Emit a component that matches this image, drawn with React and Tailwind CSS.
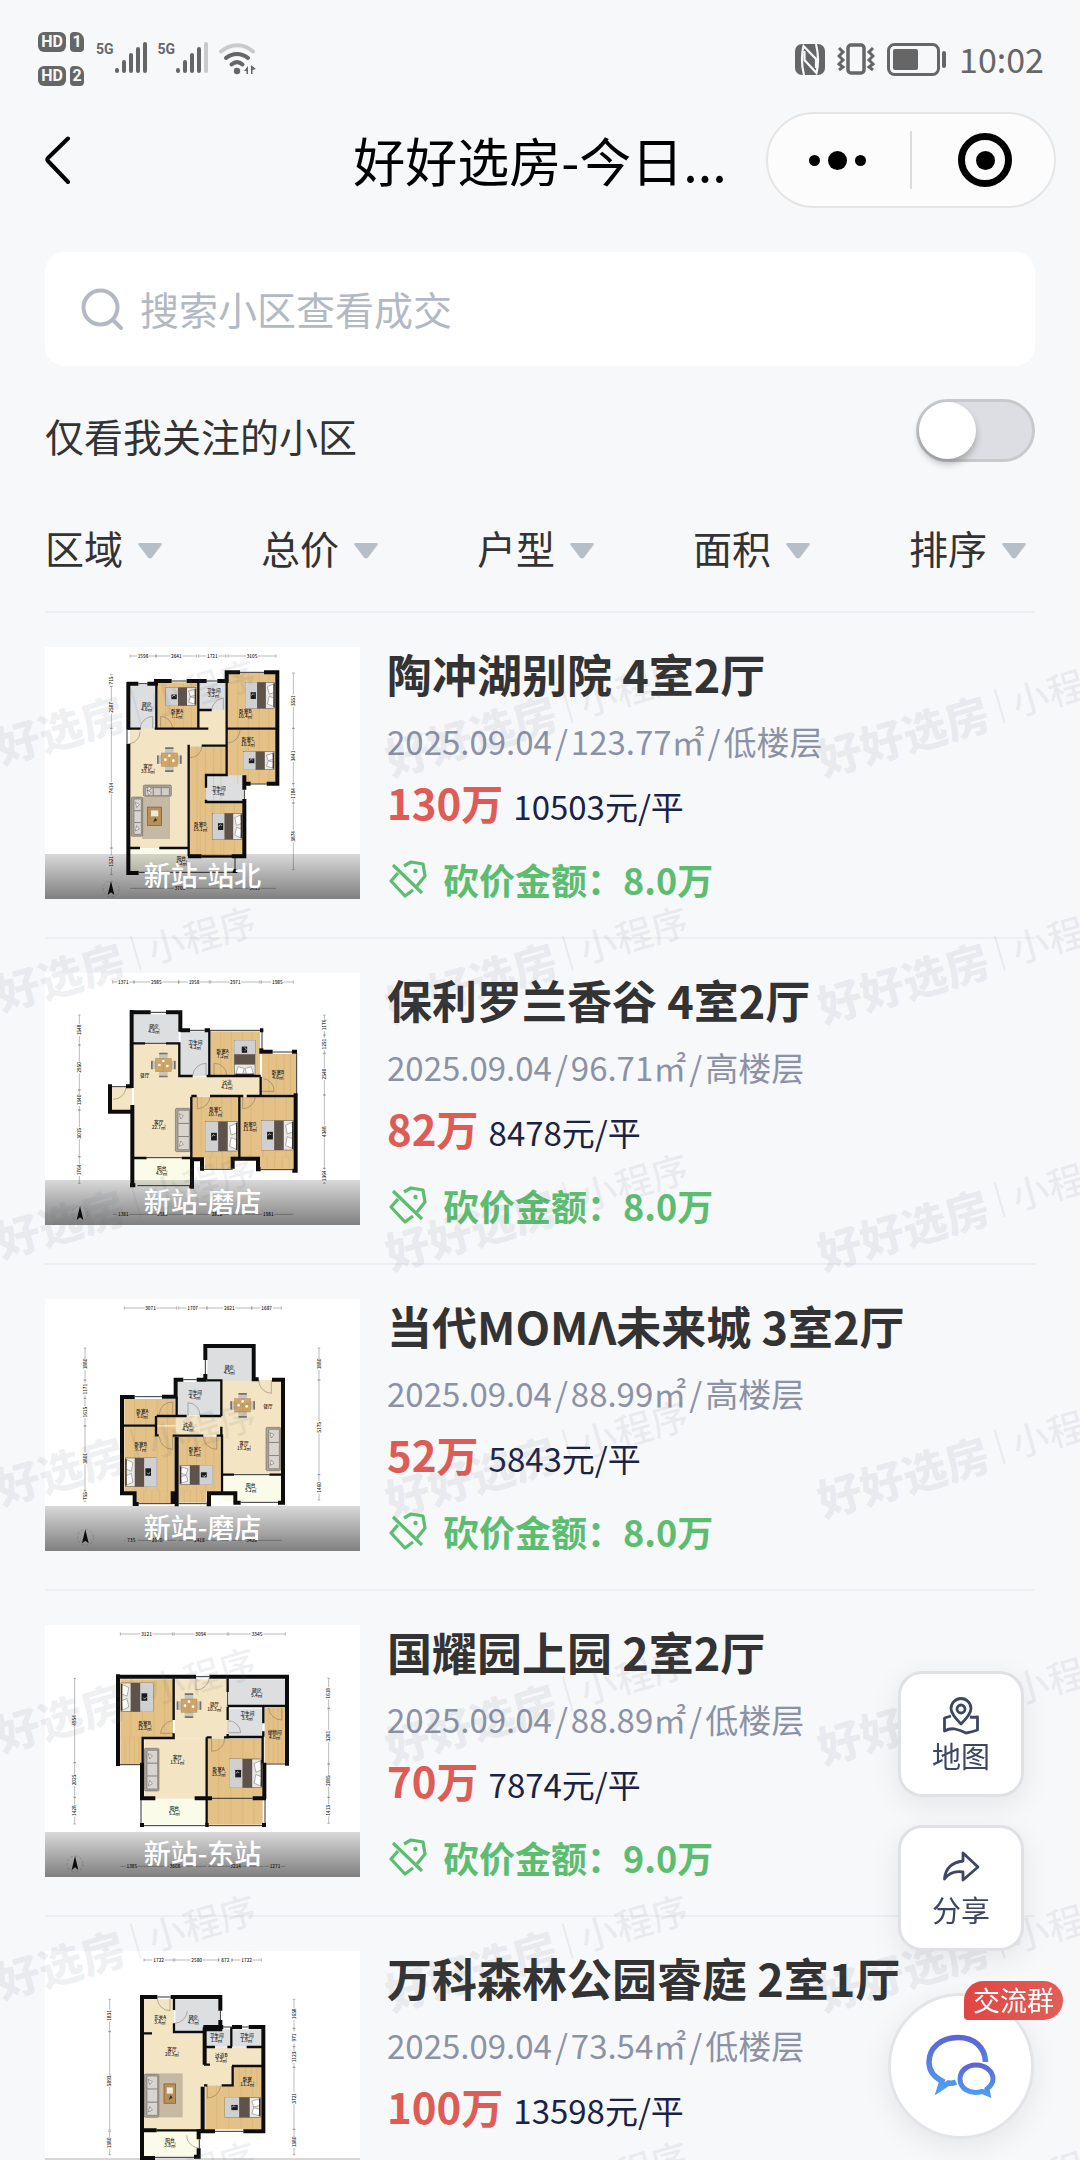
import React, { useState } from 'react';

const homes = [
  { name: '陶冲湖别院 4室2厅', date: '2025.09.04', area: '123.77㎡', floor: '低楼层', price: '130万', unit: '10503元/平', cut: '8.0万', district: '新站-站北' },
  { name: '保利罗兰香谷 4室2厅', date: '2025.09.04', area: '96.71㎡', floor: '高楼层', price: '82万', unit: '8478元/平', cut: '8.0万', district: '新站-磨店' },
  { name: '当代MOMΛ未来城 3室2厅', date: '2025.09.04', area: '88.99㎡', floor: '高楼层', price: '52万', unit: '5843元/平', cut: '8.0万', district: '新站-磨店' },
  { name: '国耀园上园 2室2厅', date: '2025.09.04', area: '88.89㎡', floor: '低楼层', price: '70万', unit: '7874元/平', cut: '9.0万', district: '新站-东站' },
  { name: '万科森林公园睿庭 2室1厅', date: '2025.09.04', area: '73.54㎡', floor: '低楼层', price: '100万', unit: '13598元/平', cut: '8.0万', district: '新站-站北' },
];

const filters = ['区域', '总价', '户型', '面积', '排序'];

// Floor kinds: t = tile, w = wood, g = wet room, b = balcony
const floorColors = { t: '#f3e5c3', w: '#e3c187', g: '#dcdee0', b: '#fafbe8' };

// Every plan is drawn on a 945 x 756 sheet
const plans = [
  {
    origin: [45, 52],
    rooms: [
      ['t', 300, 240, 290, 110], ['t', 300, 340, 176, 315], ['g', 300, 165, 78, 131], ['w', 382, 158, 122, 138],
      ['g', 507, 158, 84, 83], ['w', 594, 130, 146, 166], ['w', 594, 300, 146, 162], ['w', 479, 350, 112, 330],
      ['w', 479, 515, 160, 165], ['g', 528, 437, 112, 78], ['b', 300, 657, 174, 72],
    ],
    thick: 'M295 157V300M295 342V730H326M290 162H325M352 162H378V154H425M470 154H530M562 154H590V128H630M702 128H742V462H710M662 462H638M643 437V480M643 508V680H605M474 680H515M608 724H622',
    thin: 'M379 160V296M505 158V296M295 297H332M374 297H535M590 150V297H742M507 241H545M590 241V250M590 300V436H528V474M528 510V517H640M515 348H590M476 345V680M297 655H330M388 655H476M515 680H610',
    win: 'M325 162H352M425 154H470M530 154H562M630 128H702M662 463H710M643 480V508M326 728H620M515 682H605M291 300V342M615 684V720',
    doors: 'M330 296A40 40 0 0 1 368 260V296M392 296V260A38 38 0 0 1 428 296M545 240A40 40 0 0 1 580 205V240M594 340A40 40 0 0 0 630 302M300 342A36 36 0 0 0 330 306M480 384A36 36 0 0 0 516 350',
    beds: [[408, 174, 90, 54, 0], [646, 158, 88, 78, 0], [640, 366, 92, 54, 0], [548, 551, 88, 78, 0]],
    tables: [[418, 390]],
    sofas: [[304, 502, 34, 118, 0], [340, 466, 84, 34, 1]],
    rugs: [[336, 502, 84, 126]],
    labels: [['厨房', '4.6㎡', 350, 230], ['卧室A', '7.1㎡', 441, 250], ['卫生间', '3.2㎡', 551, 187], ['卧室B', '10.4㎡', 646, 250], ['卧室C', '10.2㎡', 654, 333], ['客厅', '33.8㎡', 354, 414], ['卫生间', '3.5㎡', 566, 482], ['卧室D', '15.1㎡', 511, 588], ['阳台', '4.2㎡', 454, 690]],
    dimX: [[300, 378, '1598'], [378, 500, '2641'], [506, 588, '1721'], [594, 738, '3105']],
    dimY: [[244, 135, 170, '715'], [244, 170, 296, '2587'], [244, 296, 655, '7414'], [244, 655, 735, '1521'], [790, 130, 296, '3551'], [790, 296, 462, '3441'], [790, 462, 520, '1184'], [790, 520, 720, '3874']],
    south: [[300, 600, '3700'], [610, 738, '3015']],
    compass: [243, 778],
  },
  {
    origin: [45, 39],
    rooms: [
      ['t', 312, 250, 134, 345], ['t', 312, 350, 380, 58], ['t', 440, 400, 44, 194], ['g', 312, 163, 134, 86], ['g', 452, 214, 85, 134],
      ['w', 542, 214, 148, 133], ['w', 696, 282, 102, 122], ['w', 486, 410, 140, 184], ['w', 630, 410, 165, 184],
      ['w', 524, 590, 84, 36], ['w', 690, 590, 104, 38], ['b', 312, 596, 170, 78], ['t', 246, 382, 60, 68],
    ],
    thick: 'M305 150V384M288 379H305M240 373V455H307V435M307 440V678M300 157H362M408 157H451V215M451 211H480M524 211H540M690 211H700M694 265V275H728M786 275H801M797 400V632H787M316 676H300M486 594V680H478M486 598H516V626H522M608 626V596H684V628H692',
    thin: 'M305 250H345M408 250H448V348H488M530 348H692M538 212V348M692 350V408H800M650 408H700M484 410V595M484 408H500M540 408H640M628 410V594M312 594H350M455 594H484',
    win: 'M362 157H408M480 211H524M540 211H690M696 216V265M728 276H786M800 280V405M522 628H608M692 629H787M322 677H478M488 628V670M242 380H288M345 250H408M350 593H455',
    doors: 'M488 346A40 40 0 0 1 528 310V346M552 346V310A36 36 0 0 1 590 346M696 394H732A36 36 0 0 0 700 356M502 410V446A38 38 0 0 0 540 410M638 410V446A38 38 0 0 0 676 410M250 418A38 38 0 0 0 288 382',
    beds: [[592, 262, 104, 62, 90], [526, 485, 96, 88, 0], [694, 482, 96, 88, 0]],
    tables: [[400, 315]],
    sofas: [[436, 445, 46, 130, 0]],
    rugs: [],
    labels: [['厨房', '4.8㎡', 372, 204], ['卫生间', '4.2㎡', 496, 253], ['卧室A', '7.2㎡', 578, 280], ['卧室B', '4.6㎡', 744, 342], ['餐厅', '', 344, 350], ['过道', '4.1㎡', 591, 373], ['卧室C', '10.7㎡', 556, 452], ['卧室D', '11.6㎡', 660, 498], ['客厅', '22.7㎡', 386, 492], ['阳台', '4.9㎡', 395, 630]],
    dimX: [[248, 312, '1371'], [312, 446, '2985'], [446, 538, '1958'], [542, 690, '2971'], [694, 790, '1985']],
    dimY: [[148, 165, 255, '1548'], [148, 255, 390, '2950'], [148, 390, 450, '1340'], [148, 450, 590, '3015'], [148, 590, 670, '1764'], [883, 165, 225, '1176'], [883, 225, 280, '1251'], [883, 280, 405, '2548'], [883, 405, 625, '4348'], [883, 625, 670, '1364']],
    south: [[248, 312, '1381'], [312, 482, '3588'], [482, 640, '2812'], [640, 790, '1981']],
    compass: [150, 762],
  },
  {
    origin: [45, 57],
    rooms: [
      ['t', 576, 300, 178, 284], ['t', 380, 408, 200, 58], ['g', 532, 204, 132, 98], ['g', 444, 306, 128, 100],
      ['w', 283, 357, 154, 78], ['w', 283, 440, 154, 195], ['w', 320, 630, 108, 40], ['w', 446, 470, 126, 165], ['w', 446, 630, 84, 38], ['b', 578, 586, 174, 78],
    ],
    thick: 'M526 240V198H671V298H686M526 282V299M500 299H530M432 299H460M437 293V350H396M314 351H276V640H314V672H326M428 672V640H440V470M440 640V673H446M530 673H537V640H616V668H632M744 668H759V299H726',
    thin: 'M530 301H574V408M380 408H470M510 408H574M378 408V437H280M378 437V466H386M440 350V408M440 467H450M428 467H520M560 467H576V640M576 584H612M718 584H755M574 300V360M574 440V470',
    win: 'M526 240V282M460 299H500M314 350H396M326 671H428M446 671H530M632 667H744M612 584H718',
    doors: 'M474 408V368A38 38 0 0 1 510 408M388 402A38 38 0 0 1 428 366V402M388 470A40 40 0 0 0 428 508V470M520 470A40 40 0 0 0 560 508V470M686 300A40 40 0 0 0 724 340V300',
    beds: [[286, 534, 94, 86, 180], [450, 556, 98, 58, 180]],
    tables: [[638, 376]],
    sofas: [[708, 442, 44, 130, 0]],
    rugs: [],
    labels: [['厨房', '4.5㎡', 598, 266], ['卫生间', '4.5㎡', 495, 341], ['卧室A', '5.0㎡', 337, 400], ['过道', '4.2㎡', 474, 438], ['餐厅', '', 714, 384], ['卧室B', '9.7㎡', 332, 497], ['卧室C', '8.1㎡', 495, 512], ['客厅', '19.2㎡', 642, 495], ['阳台', '5.2㎡', 662, 622]],
    dimX: [[283, 440, '3071'], [446, 530, '1707'], [532, 664, '2621'], [666, 754, '1687']],
    dimY: [[165, 204, 300, '1880'], [165, 300, 355, '1171'], [165, 355, 438, '1615'], [165, 438, 632, '3801'], [165, 632, 664, '755'], [867, 204, 300, '1880'], [867, 300, 584, '5175'], [867, 584, 660, '1460']],
    south: [[283, 325, '735'], [325, 438, '2070'], [446, 570, '2418'], [576, 754, '3428']],
    compass: [166, 772],
  },
  {
    origin: [45, 45],
    rooms: [
      ['w', 271, 208, 158, 175], ['w', 271, 380, 66, 84], ['t', 435, 208, 157, 178], ['t', 343, 386, 186, 180], ['g', 596, 208, 170, 80],
      ['g', 596, 296, 102, 84], ['w', 704, 294, 62, 166], ['w', 533, 386, 165, 258], ['b', 340, 568, 188, 76],
    ],
    thick: 'M264 193V468M258 200H498M538 200H771V467M336 458V570M330 565H376M494 565H546M668 565H708M703 458V568M330 645H342M526 645H536M696 645H708',
    thin: 'M431 205V330M431 370V384H338V460M593 205V246M593 288H768M593 290V330M593 372V381H698V460M700 290V340M700 364V380M530 382V645M530 382H545M582 382H598',
    win: 'M498 200H538M270 464H332M708 462H766M333 570V642M340 647H700M705 570V642M593 246V288M546 565H668',
    doors: 'M498 204V240A40 40 0 0 0 538 204M431 370H392A40 40 0 0 1 428 332M594 332V368H632A38 38 0 0 0 594 332M716 294A40 40 0 0 0 755 330V294M545 386V424A38 38 0 0 0 584 386',
    beds: [[273, 219, 96, 86, 180], [598, 447, 98, 86, 0]],
    tables: [[477, 287]],
    sofas: [[343, 415, 44, 128, 0]],
    rugs: [],
    labels: [['卧室B', '12.8㎡', 344, 344], ['餐厅', '10.3㎡', 553, 288], ['厨房', '5.4㎡', 680, 247], ['卫生间', '3.5㎡', 652, 315], ['储物间', '4.0㎡', 734, 372], ['客厅', '13.1㎡', 442, 447], ['卧室A', '15.3㎡', 566, 484], ['阳台', '5.2㎡', 433, 600]],
    dimX: [[271, 428, '3121'], [432, 592, '3094'], [596, 766, '3345']],
    dimY: [[134, 205, 458, '4954'], [134, 458, 562, '2025'], [134, 562, 642, '1428'], [896, 205, 295, '1618'], [896, 295, 462, '3261'], [896, 462, 562, '2085'], [896, 562, 640, '1413']],
    south: [[271, 340, '1385'], [340, 530, '3608'], [534, 700, '3214'], [704, 766, '1271']],
    compass: [135, 762],
  },
  {
    origin: [45, 63],
    rooms: [
      ['t', 342, 208, 90, 104], ['t', 342, 310, 178, 290], ['g', 436, 208, 132, 96], ['g', 526, 298, 74, 52], ['g', 608, 298, 86, 52],
      ['t', 526, 352, 168, 56], ['t', 518, 405, 90, 60], ['w', 526, 466, 168, 132], ['w', 612, 410, 82, 60], ['b', 342, 604, 168, 76],
    ],
    thick: 'M336 196V310M330 201H382M422 201H571V242M571 270V298H524V404M520 291H580M606 291H636M656 291H700V604H640M555 604H518V470M520 604H506V628M336 300V684H375M506 655V680H492M336 601H380',
    thin: 'M432 205V240M432 280V306H522M340 310H366M604 292V350M524 351H555M592 351H606M650 351H698M606 408H700M608 408V466H575M522 466H532M522 404H540M486 601H520M380 601H486',
    win: 'M382 201H422M571 242V270M580 291H606M636 291H656M555 604H640M375 682H492M508 628V655',
    doors: 'M382 206A38 38 0 0 0 420 242V206M434 280A40 40 0 0 0 472 244M532 468V504A40 40 0 0 0 572 468M470 616A38 38 0 0 0 506 654',
    beds: [[585, 502, 106, 60, 0]],
    tables: [],
    sofas: [[343, 432, 44, 130, 0]],
    rugs: [[388, 430, 70, 132]],
    labels: [['玄关A', '3.4㎡', 390, 268], ['厨房', '4.7㎡', 490, 268], ['卫生间', '1.8㎡', 560, 320], ['卫生间', '1.9㎡', 650, 320], ['过道B', '3.2㎡', 574, 382], ['客厅', '20.3㎡', 426, 364], ['卧室', '11.2㎡', 652, 453], ['阳台', '3.8㎡', 420, 637]],
    dimX: [[342, 430, '1722'], [434, 566, '2580'], [566, 606, '672'], [606, 694, '1722']],
    dimY: [[239, 208, 305, '1831'], [239, 305, 600, '5893'], [239, 604, 674, '1380'], [792, 208, 295, '1658'], [792, 295, 350, '971'], [792, 350, 412, '1123'], [792, 412, 598, '3721'], [792, 598, 674, '1380']],
    south: [],
    compass: [239, 780],
  },
];

const Bed = ({ x, y, w, h, turn }) => (
  <g transform={`rotate(${turn} ${x + w / 2} ${y + h / 2})`}>
    <rect x={x} y={y} width={w} height={h} fill="#e9e8e6" stroke="#4d463f" strokeWidth="1.5" />
    <rect x={x} y={y} width={w * 0.4} height={h} fill="#cfd0d1" />
    <rect x={x + w * 0.4} y={y} width={w * 0.3} height={h} fill="#5d534a" />
    <rect x={x + w * 0.18} y={y + h * 0.38} width={w * 0.18} height={h * 0.26} fill="#1c1c1c" />
    <path d={`M${x + w * 0.2} ${y + h * 0.5}l6 -5 4 4`} fill="none" stroke="#fff" strokeWidth="2" />
    <path d={`M${x + w - 4} ${y + 5}l-${w * 0.2} ${h * 0.1} 5 ${h * 0.3} ${w * 0.18} ${-h * 0.08}z`} fill="#fff" stroke="#6b665f" strokeWidth="1.5" />
    <path d={`M${x + w - 4} ${y + h - 5}l-${w * 0.2} -${h * 0.1} 5 -${h * 0.3} ${w * 0.18} ${h * 0.08}z`} fill="#fff" stroke="#6b665f" strokeWidth="1.5" />
    <rect x={x + w - 4} y={y + 3} width="4" height={h - 6} fill="#3b342e" />
  </g>
);

const DiningTable = ({ x, y }) => (
  <g>
    {[0, 90, 180, 270].map((a) => (
      <g key={a} transform={`rotate(${a} ${x} ${y})`}>
        <rect x={x - 13} y={y - 36} width="26" height="22" rx="3" fill="#c9c4bd" />
        <rect x={x - 13} y={y - 37} width="26" height="5" rx="2" fill="#75706b" />
      </g>
    ))}
    <rect x={x - 24} y={y - 20} width="48" height="40" fill="#cfa565" stroke="#9a7843" strokeWidth="1" />
    <path d={`M${x} ${y - 20}V${y + 20}`} stroke="#a9834a" strokeWidth="1" />
    <circle cx={x - 12} cy={y} r="4" fill="#fff" />
    <circle cx={x + 12} cy={y + 3} r="4" fill="#fff" />
    <circle cx={x} cy={y - 12} r="4" fill="#fff" />
  </g>
);

const Sofa = ({ x, y, w, h, flat }) => (
  <g stroke="#5e5852" strokeWidth="1.5">
    <rect x={x} y={y} width={w} height={h} rx="4" fill="#aaa39c" />
    {[0, 1, 2].map((i) =>
      flat ? (
        <rect key={i} x={x + 6 + (i * (w - 12)) / 3} y={y + 8} width={(w - 12) / 3} height={h - 10} rx="2" fill="#d3cec8" />
      ) : (
        <rect key={i} x={x + 8} y={y + 6 + (i * (h - 12)) / 3} width={w - 12} height={(h - 12) / 3} rx="2" fill="#d9d4ce" />
      )
    )}
    <path d={`M${x + 12} ${y + 16}l12 6 -8 10zM${x + 12} ${y + h - 16}l12 -6 -8 -10z`} fill="#f1efec" />
  </g>
);

const Rug = ({ x, y, w, h }) => (
  <g>
    <rect x={x} y={y} width={w} height={h} fill="#c5b9a4" />
    <rect x={x + w * 0.2} y={y + h * 0.24} width={w * 0.5} height={h * 0.44} fill="#b98f55" stroke="#755730" strokeWidth="2" />
    <rect x={x + w * 0.32} y={y + h * 0.32} width={w * 0.26} height={h * 0.14} fill="#efe9dc" />
    <path d={`M${x + w * 0.4} ${y + h * 0.6}l6 -14 6 8z`} fill="#333" />
  </g>
);

const FloorPlan = ({ plan }) => {
  const [ox, oy] = plan.origin;
  const top = oy + 27;
  const low = oy + 724;
  return (
    <svg viewBox={`${ox} ${oy} 945 756`} className="block w-full bg-white" aria-hidden="true" fontFamily="Noto Sans CJK SC, sans-serif">
      {plan.rooms.map(([kind, x, y, w, h], i) => (
        <rect key={i} x={x} y={y} width={w} height={h} fill={floorColors[kind]} />
      ))}
      {plan.rooms.filter((r) => r[0] === 'w').map(([, x, y, w, h], i) => (
        <path key={i} d={`M${x + w * 0.2} ${y}v${h}M${x + w * 0.42} ${y}v${h}M${x + w * 0.64} ${y}v${h}M${x + w * 0.84} ${y}v${h}`} stroke="#cfa45a" strokeWidth="1.5" opacity="0.6" />
      ))}
      {plan.rugs.map(([x, y, w, h], i) => <Rug key={i} x={x} y={y} w={w} h={h} />)}
      {plan.beds.map(([x, y, w, h, turn], i) => <Bed key={i} x={x} y={y} w={w} h={h} turn={turn} />)}
      {plan.tables.map(([x, y], i) => <DiningTable key={i} x={x} y={y} />)}
      {plan.sofas.map(([x, y, w, h, flat], i) => <Sofa key={i} x={x} y={y} w={w} h={h} flat={flat} />)}
      <path d={plan.win} fill="none" stroke="#333" strokeWidth="3" />
      <path d={plan.doors} fill="none" stroke="#77705f" strokeWidth="1.5" />
      <path d={plan.thin} fill="none" stroke="#0c0c0c" strokeWidth="7" />
      <path d={plan.thick} fill="none" stroke="#0c0c0c" strokeWidth="12" strokeLinejoin="miter" />
      <g fontSize="14" fill="#222" textAnchor="middle" fontWeight="500">
        {plan.labels.map(([a, b, x, y], i) => (
          <React.Fragment key={i}>
            <text x={x} y={y}>{a}</text>
            <text x={x} y={y + 15}>{b}</text>
          </React.Fragment>
        ))}
        {plan.dimX.map(([a, b, n], i) => (
          <g key={i}>
            <path d={`M${a} ${top}H${(a + b) / 2 - 18}M${(a + b) / 2 + 18} ${top}H${b}M${a} ${top - 5}v10M${b} ${top - 5}v10`} stroke="#777" strokeWidth="1.5" />
            <text x={(a + b) / 2} y={top + 5}>{n}</text>
          </g>
        ))}
        {plan.south.map(([a, b, n], i) => (
          <g key={i}>
            <path d={`M${a} ${low}H${(a + b) / 2 - 18}M${(a + b) / 2 + 18} ${low}H${b}`} stroke="#777" strokeWidth="1.5" />
            <text x={(a + b) / 2} y={low + 5}>{n}</text>
          </g>
        ))}
        {plan.dimY.map(([x, a, b, n], i) => (
          <g key={i}>
            <path d={`M${x} ${a}V${(a + b) / 2 - 18}M${x} ${(a + b) / 2 + 18}V${b}M${x - 4} ${a}h8M${x - 4} ${b}h8`} stroke="#777" strokeWidth="1.5" />
            <text x={x} y={(a + b) / 2 + 5} transform={`rotate(-90 ${x} ${(a + b) / 2})`}>{n}</text>
          </g>
        ))}
      </g>
      <circle cx={plan.compass[0]} cy={plan.compass[1]} r="24" fill="none" stroke="#888" strokeWidth="1" strokeDasharray="8 6" />
      <path d={`M${plan.compass[0]} ${plan.compass[1] - 24}l10 42 -10 -8 -10 8z`} fill="#111" />
    </svg>
  );
};

const SimBadge = ({ n }) => (
  <div className="flex gap-1">
    <span className="flex h-5 w-7 items-center justify-center rounded-md bg-[#666] text-[16px] font-bold text-[#f7f8fa]">HD</span>
    <span className="flex h-5 w-[14px] items-center justify-center rounded-[4px] rounded-tr-lg bg-[#666] text-[16px] font-bold text-[#f7f8fa]">{n}</span>
  </div>
);

const Signal = ({ weak }) => (
  <div className="flex items-start">
    <span className="h-8 text-[14px] leading-[14px] font-bold">5G</span>
    <svg width="34" height="32" viewBox="0 0 34 32" stroke="#666" strokeWidth="4" strokeLinecap="round" aria-hidden="true">
      <path d="M3 29v-1M10 29v-9M17 29v-16M24 29v-22" />
      <path d="M31 29V2" stroke={weak ? '#c9cacc' : '#666'} />
    </svg>
  </div>
);

const StatusBar = () => (
  <div className="flex h-[112px] items-center justify-between pt-[6px] pr-9 pl-[38px] text-[#666]">
    <div className="flex items-center gap-3">
      <div className="flex flex-col gap-[14px] font-['Liberation_Sans_Narrow','Roboto',sans-serif]">
        <SimBadge n="1" />
        <SimBadge n="2" />
      </div>
      <div className="flex gap-[10px] font-['Liberation_Sans_Narrow','Roboto',sans-serif]">
        <Signal />
        <Signal weak />
        <svg width="38" height="34" viewBox="0 0 38 34" fill="none" stroke="#666" strokeWidth="4" strokeLinecap="round" aria-hidden="true">
          <path d="M2 9.500C12 1 25 1 34 9.500" stroke="#c9cacc" />
          <path d="M7 16C13.500 10.500 22.500 10.500 29 16" />
          <path d="M12.500 22.500C16 19.500 20 19.500 23.500 22.500" />
          <circle cx="18" cy="29" r="3.200" fill="#666" stroke="none" />
          <path d="M25 29l4-5v8h-1.500v-3zM37 27l-5-4v9h1.500v-4z" fill="#666" stroke="none" />
        </svg>
      </div>
    </div>
    <div className="flex items-center gap-3">
      <svg width="30" height="31" viewBox="0 0 30 31" aria-hidden="true">
        <rect width="30" height="31" rx="7" fill="#666" />
        <path d="M9 31C6.500 21 6.500 10 8.500 2L21 15V24M21 0C23.500 10 23.500 21 21.500 29L9.500 16V7" fill="none" stroke="#f7f8fa" strokeWidth="2.200" />
      </svg>
      <svg width="38" height="32" viewBox="0 0 38 32" fill="none" stroke="#666" strokeWidth="3" aria-hidden="true">
        <rect x="11" y="2" width="16" height="28" rx="3" strokeWidth="3.500" />
        <path d="M2 5l4 4-4 4 4 4-4 4 4 3-4 3M36 5l-4 4 4 4-4 4 4 4-4 3 4 3" />
      </svg>
      <svg width="60" height="33" viewBox="0 0 60 33" aria-hidden="true">
        <rect x="1.500" y="1.500" width="50" height="30" rx="6" fill="none" stroke="#666" strokeWidth="3" />
        <rect x="6" y="6" width="25" height="21" rx="2" fill="#666" />
        <path d="M57 10v13" stroke="#666" strokeWidth="4" strokeLinecap="round" />
      </svg>
      <span className="text-[34px] leading-9">10:02</span>
    </div>
  </div>
);

const NavBar = () => (
  <header className="grid grid-cols-[1fr_auto_1fr] items-center px-6 text-black">
    <button type="button" aria-label="返回" className="flex h-24 w-16 items-center pl-5">
      <svg width="28" height="48" viewBox="0 0 28 48" fill="none" stroke="#000" strokeWidth="4" strokeLinecap="round" strokeLinejoin="round" aria-hidden="true">
        <path d="M24 2.500L4 22q-1.500 1.500 0 3L24 46" />
      </svg>
    </button>
    <h1 className="text-[52px] leading-[64px]">好好选房-今日...</h1>
    <div className="flex h-24 w-[290px] items-center justify-self-end rounded-full border-2 border-[#e5e5e6] bg-[#fcfcfc]">
      <button type="button" aria-label="更多" className="flex h-full flex-1 items-center justify-center gap-2 pr-1">
        <i className="size-[11px] rounded-full bg-black" />
        <i className="size-[19px] rounded-full bg-black" />
        <i className="size-[11px] rounded-full bg-black" />
      </button>
      <span className="h-[58px] w-[2px] bg-[#dcdcdc]" />
      <button type="button" aria-label="关闭" className="flex h-full flex-1 items-center justify-center pl-1">
        <span className="flex size-[54px] items-center justify-center rounded-full border-[7px] border-black">
          <i className="size-[19px] rounded-full bg-black" />
        </span>
      </button>
    </div>
  </header>
);

const CutIcon = () => (
  <svg width="38" height="38" viewBox="0 0 38 38" fill="none" stroke="#5cbd70" strokeWidth="3.200" strokeLinejoin="round" aria-hidden="true">
    <path d="M15 6L22 2L34 4L36 16L28 26M24 30L16 36L2 21L9 13" />
    <path d="M4 5L33 33" />
    <circle cx="26.500" cy="11" r="2.200" fill="#5cbd70" stroke="none" />
  </svg>
);

const HomeItem = ({ home, plan }) => (
  <li className="flex items-start gap-[27px] border-b-2 border-[#eceef1] pt-[34px] pb-[38px]">
    <div className="relative h-[252px] w-[315px] shrink-0">
      <FloorPlan plan={plan} />
      <div className="absolute inset-x-0 bottom-0 h-[45px] bg-linear-to-b from-black/15 to-black/50 text-center text-[27px] leading-[42px] font-medium text-white">
        {home.district}
      </div>
    </div>
    <div className="min-w-0 flex-1">
      <h2 className="text-[45px] leading-[54px] font-bold text-[#333]">{home.name}</h2>
      <p className="mt-[18px] flex gap-[3px] text-[33px] leading-[44px] text-[#8b92a5]">
        <span>{home.date}</span>
        <span>/</span>
        <span>{home.area}</span>
        <span>/</span>
        <span>{home.floor}</span>
      </p>
      <p className="mt-[14px] flex items-baseline gap-[10px] leading-[50px]">
        <strong className="text-[42px] font-bold text-[#de5c55]">{home.price}</strong>
        <span className="text-[33px] text-[#1b2345]">{home.unit}</span>
      </p>
      <p className="mt-7 flex items-center gap-4 pl-[2px] text-[36px] leading-[40px] font-bold text-[#5cbd70]">
        <CutIcon />
        <span>砍价金额：{home.cut}</span>
      </p>
    </div>
  </li>
);

const Watermark = () => (
  <div className="pointer-events-none absolute inset-0 grid auto-rows-[247px] grid-cols-[repeat(3,432px)] content-start justify-center overflow-hidden pr-2 text-[#5a6478]/9" aria-hidden="true">
    {Array.from({ length: 21 }, (_, i) => (
      <div key={i} className="flex items-center justify-center pb-11">
        <span className="flex -rotate-16 items-center gap-3 whitespace-nowrap">
          <b className="text-[44px] font-black">好好选房</b>
          <i className="h-9 w-[2px] bg-current" />
          <span className="text-[37px] font-medium">小程序</span>
        </span>
      </div>
    ))}
  </div>
);

const FloatButton = ({ label, children }) => (
  <button type="button" className="flex size-[126px] flex-col items-center justify-center rounded-3xl border-[3px] border-[#e0e1e4] bg-white pt-1 text-[29px] leading-10 text-[#3d4663] shadow-[0_8px_30px_rgba(0,0,0,0.08)]">
    {children}
    {label}
  </button>
);

const FloatMenu = () => (
  <div className="fixed right-[46px] bottom-[21px] flex flex-col items-center">
    <FloatButton label="地图">
      <svg width="38" height="38" viewBox="0 0 38 38" fill="none" stroke="#3d4663" strokeWidth="2.800" strokeLinejoin="round" aria-hidden="true">
        <path d="M19 27C12 20 9 16 9 11.500a10 10 0 0 1 20 0C29 16 26 20 19 27z" />
        <circle cx="19" cy="12" r="4" />
        <path d="M9 19L2.500 21V34Q8 31 13 32T24 36Q30 35 35.500 33V20Q32 20.500 28 20" />
      </svg>
    </FloatButton>
    <div className="mt-7">
      <FloatButton label="分享">
        <svg width="38" height="38" viewBox="0 0 38 38" fill="none" stroke="#3d4663" strokeWidth="2.800" strokeLinejoin="round" aria-hidden="true">
          <path d="M21 2L36 16L21 29V21Q9 19 2.500 28Q4 12 21 10z" />
        </svg>
      </FloatButton>
    </div>
    <button type="button" className="relative mt-[42px] flex size-[146px] items-center justify-center rounded-full border-[3px] border-[#e3e4e8] bg-white shadow-[0_8px_30px_rgba(0,0,0,0.08)]">
      <svg width="72" height="68" viewBox="0 0 72 68" fill="none" strokeWidth="5.500" aria-hidden="true">
        <defs>
          <linearGradient id="chatBig" x1="0" y1="0" x2="0" y2="1">
            <stop offset="0" stopColor="#5a66d6" />
            <stop offset="1" stopColor="#4f9cf0" />
          </linearGradient>
        </defs>
        <path d="M60.500 30C60 15 49 5.500 33 5.500C16 5.500 4 16 4 30C4 38 9 45 17 49L14.500 57L23.500 51Q27 52 31 50" stroke="url(#chatBig)" />
        <path d="M51 33C60 33 68 39 68 47C68 51 66 54 62 57L63 62L57 59.500C44 63 35 56 35 47C35 39 42 33 51 33z" stroke="url(#chatBig)" strokeWidth="5" />
      </svg>
      <span className="absolute -top-[15px] -right-8 h-[39px] rounded-[20px] rounded-bl-[4px] bg-linear-to-r from-[#df4643] to-[#e25e58] px-[9px] text-[27px] leading-[37px] text-white">交流群</span>
    </button>
  </div>
);

export default function App() {
  const [onlyFollowed, setOnlyFollowed] = useState(false);

  return (
    <div className="flex h-screen flex-col bg-[#f7f8fa] font-['Noto_Sans_CJK_SC',sans-serif]">
      <StatusBar />
      <NavBar />

      <div className="px-[45px]">
        {/* Search */}
        <label className="mt-11 flex h-[114px] items-center gap-[17px] rounded-[20px] bg-white pl-9 text-[#b3b9c4]">
          <svg width="42" height="42" viewBox="0 0 42 42" fill="none" stroke="currentColor" strokeWidth="4" strokeLinecap="round" aria-hidden="true">
            <circle cx="19.500" cy="19.500" r="17" />
            <path d="M32 32l8 8" />
          </svg>
          <input type="text" aria-label="搜索小区" placeholder="搜索小区查看成交" className="h-full min-w-0 flex-1 pb-[2px] text-[39px] text-[#333] outline-none placeholder:text-[#b3b9c4]" />
        </label>

        {/* Followed only */}
        <label className="mt-[33px] flex items-end justify-between text-[39px] leading-[54px] text-[#333]">
          仅看我关注的小区
          <span className="relative h-[63px] w-[119px]">
            <input type="checkbox" role="switch" checked={onlyFollowed} onChange={(e) => setOnlyFollowed(e.target.checked)} className="peer block size-full appearance-none rounded-full border-[3px] border-[#c8c9cc] bg-[#dcdee3] checked:bg-[#5cbd70]" />
            <i className="pointer-events-none absolute top-[3px] left-[3px] size-[57px] rounded-full bg-white shadow-[0_5px_7px_rgba(0,0,0,0.25)] peer-checked:left-auto peer-checked:right-[3px]" />
          </span>
        </label>

        {/* Filters */}
        <div className="mt-[56px] flex justify-between border-b-2 border-[#eceef1] pb-[35px]">
          {filters.map((name) => (
            <button key={name} type="button" className="flex items-center gap-[14px] pr-2 text-[39px] leading-[58px] text-[#333]">
              {name}
              <svg width="26" height="16" viewBox="0 0 26 16" fill="#b4bfc8" className="mt-2" aria-hidden="true">
                <path d="M2.500 0h21q2 0 1 2L15 14.500q-2 2-4 0L1.500 2q-1-2 1-2z" />
              </svg>
            </button>
          ))}
        </div>
      </div>

      <main className="min-h-0 flex-1 overflow-y-auto [scrollbar-width:none]">
        <div className="relative px-[45px]">
          <ul>
            {homes.map((home, i) => (
              <HomeItem key={home.name} home={home} plan={plans[i]} />
            ))}
          </ul>
          <Watermark />
        </div>
      </main>

      <FloatMenu />
    </div>
  );
}
